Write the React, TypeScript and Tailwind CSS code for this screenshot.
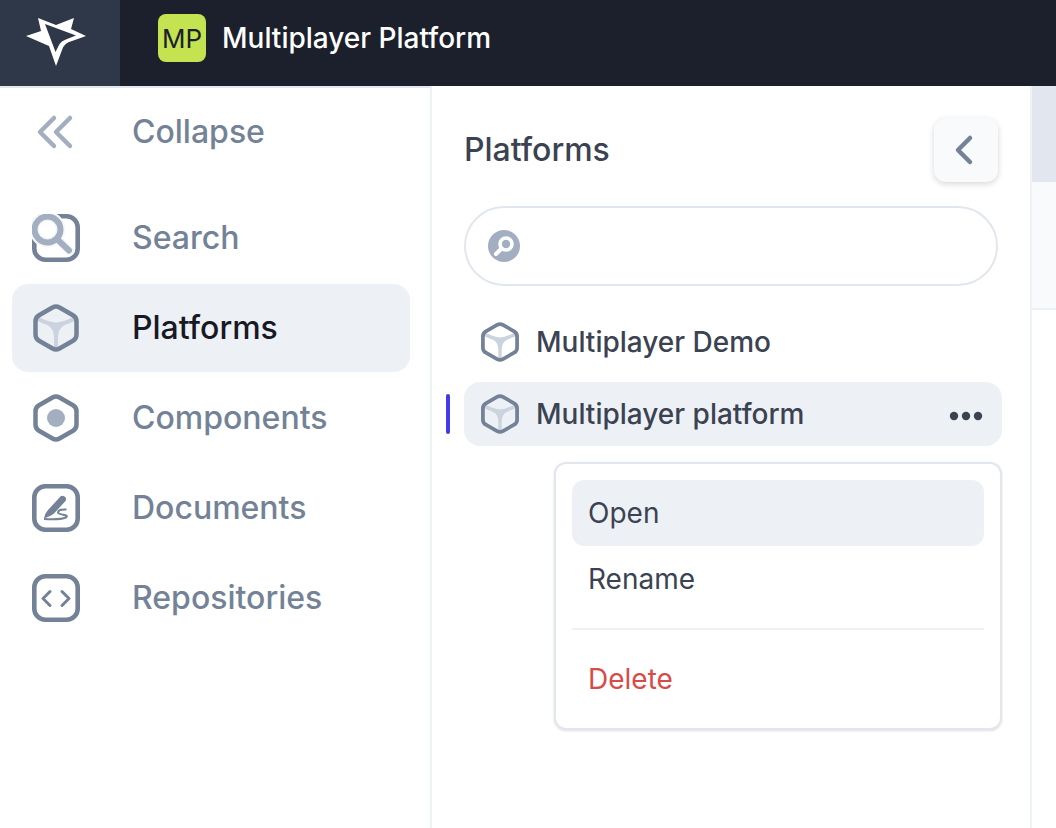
import type { ReactNode } from "react";

const HEXAGON =
  "M20.500 3.500Q24 1.500 27.500 3.500L41 11.200Q44.500 13.200 44.500 17.200V30.800Q44.500 34.800 41 36.800L27.500 44.500Q24 46.500 20.500 44.500L7 36.800Q3.500 34.800 3.500 30.800V17.200Q3.500 13.200 7 11.200Z";

function Logo() {
  return (
    <svg viewBox="0 0 60 48" className="h-12 w-15" aria-hidden="true">
      <path
        fill="#fff"
        fillRule="evenodd"
        d="M12 0 30 7 48 0 45 11 60 18 46 23Q38 25 36 32L30 48 23 28 0 18 15 13ZM19 6 29.500 34 33 27Q35 23 41 21L50 17.500Z"
      />
    </svg>
  );
}

function CollapseIcon() {
  return (
    <svg viewBox="0 0 48 48" className="size-12" fill="none" stroke="#A3AFC0" strokeWidth="4.500" strokeLinecap="round" strokeLinejoin="round" aria-hidden="true">
      <path d="M22 10 8 24l14 14M38 10 24 24l14 14" />
    </svg>
  );
}

function SearchIcon() {
  return (
    <svg viewBox="0 0 48 48" className="size-12" fill="none" aria-hidden="true">
      <rect x="2.300" y="2.300" width="43.400" height="43.400" rx="11" stroke="#748298" strokeWidth="4.600" />
      <circle cx="15.500" cy="15.500" r="18" fill="#F5F8FB" />
      <path d="m25 25 13 12" stroke="#F5F8FB" strokeWidth="9" strokeLinecap="round" />
      <path d="m25 25 12 11.500" stroke="#A3AFC0" strokeWidth="6" strokeLinecap="round" />
      <circle cx="15.500" cy="15.500" r="13" fill="#F1F5F9" stroke="#A3AFC0" strokeWidth="6" />
      <circle cx="15.500" cy="15.500" r="8.500" fill="#fff" />
    </svg>
  );
}

function CubeIcon({ className }: { className?: string }) {
  return (
    <svg viewBox="0 0 48 48" className={className} fill="none" aria-hidden="true">
      <path fill="#CBD3DE" d="M5 12Q17 18.500 24 18.500T43 12V17L32 21.500Q26 24.500 26 34V45H22V34Q22 24.500 16 21.500L5 17Z" />
      <path d={HEXAGON} stroke="#748298" strokeWidth="4.500" strokeLinejoin="round" />
    </svg>
  );
}

function ComponentIcon() {
  return (
    <svg viewBox="0 0 48 48" className="size-12" fill="none" aria-hidden="true">
      <path d={HEXAGON} stroke="#748298" strokeWidth="4.500" strokeLinejoin="round" />
      <circle cx="24" cy="24" r="9" fill="#A3AFC0" />
    </svg>
  );
}

function DocumentIcon() {
  return (
    <svg viewBox="0 0 48 48" className="size-12" fill="none" stroke="#748298" aria-hidden="true">
      <rect x="2.300" y="2.300" width="43.400" height="43.400" rx="11" strokeWidth="4.600" />
      <path fill="#748298" stroke="none" d="M28 13Q30 11 32.500 12.500T33.500 17L22 29.500Q19 32 12 34.500Q13 29 16 26Z" />
      <path d="M12 35Q28 36 34 33.500C38 30 27 31.500 26 28.500Q26 25 34.500 25.500" strokeWidth="2" />
    </svg>
  );
}

function RepositoryIcon() {
  return (
    <svg viewBox="0 0 48 48" className="size-12" fill="none" stroke="#748298" strokeLinecap="round" strokeLinejoin="round" aria-hidden="true">
      <rect x="2.300" y="2.300" width="43.400" height="43.400" rx="11" strokeWidth="4.600" />
      <path d="m18 17.500-7 7 7 7M30 17.500l7 7-7 7" strokeWidth="3" />
    </svg>
  );
}

function FilterIcon() {
  return (
    <svg viewBox="0 0 32 32" className="size-8 shrink-0" fill="none" aria-hidden="true">
      <circle cx="16" cy="16" r="16" fill="#A3AFC0" />
      <circle cx="18" cy="14" r="6" stroke="#fff" strokeWidth="3.600" />
      <path d="m13 19-5 5" stroke="#fff" strokeWidth="4" strokeLinecap="round" />
    </svg>
  );
}

type NavItemProps = { icon: ReactNode; label: string; active?: boolean };

function NavItem({ icon, label, active }: NavItemProps) {
  return (
    <a
      href="#"
      className={`flex h-22 items-center gap-13 rounded-2xl px-5 text-[32px] font-medium ${
        active ? "bg-[#EDF1F6] text-[#171923]" : "text-[#748298]"
      }`}
    >
      {icon}
      {label}
    </a>
  );
}

export default function App() {
  return (
    <div className="flex min-h-screen flex-col bg-white font-['Inter',sans-serif] text-[#3B4252]">
      <header className="flex h-[86px] bg-[#1C202C]">
        <a href="#" aria-label="Home" className="flex w-30 items-start bg-[#2F3848] pt-[18px] pl-[26px]">
          <Logo />
        </a>
        <div className="flex h-19 items-center gap-4 pl-[38px]">
          <span className="flex size-12 items-center justify-center rounded-lg bg-[#C3E351] text-[26px] text-[#1C202C]">
            MP
          </span>
          <span className="text-[28px] font-medium text-white">Multiplayer Platform</span>
        </div>
      </header>

      <div className="flex grow">
        <nav className="flex w-[432px] shrink-0 flex-col gap-0.5 border-t-2 border-r-2 border-t-[#E2E8F0] border-r-[#EDF2F7] pr-5 pl-3">
          <button type="button" className="mb-4 flex h-22 items-center gap-13 px-5 text-[32px] font-medium text-[#748298]">
            <CollapseIcon />
            Collapse
          </button>
          <NavItem icon={<SearchIcon />} label="Search" />
          <NavItem icon={<CubeIcon className="size-12" />} label="Platforms" active />
          <NavItem icon={<ComponentIcon />} label="Components" />
          <NavItem icon={<DocumentIcon />} label="Documents" />
          <NavItem icon={<RepositoryIcon />} label="Repositories" />
        </nav>

        <section className="min-w-0 grow border-r-2 border-[#EDF2F7] pt-8 pr-7 pl-8">
          <div className="mr-1 flex items-center justify-between">
            <h1 className="text-[32px] font-medium">Platforms</h1>
            <button
              type="button"
              aria-label="Back"
              className="flex size-16 items-center justify-center rounded-xl bg-[#F8FAFC] shadow-[0_2px_6px_rgba(0,0,0,0.16)]"
            >
              <svg viewBox="0 0 32 32" className="size-8" fill="none" stroke="#748298" strokeWidth="4.500" strokeLinecap="round" strokeLinejoin="round">
                <path d="M20 4 8 16l12 12" />
              </svg>
            </button>
          </div>

          <label className="mt-6 mr-1 flex h-20 items-center gap-4 rounded-full border-2 border-[#E2E7EE] px-[22px]">
            <FilterIcon />
            <input type="search" aria-label="Search platforms" className="min-w-0 grow text-[28px] outline-none" />
          </label>

          <ul className="mt-6 flex flex-col gap-2 text-[28px] font-medium">
            <li className="flex h-16 items-center gap-4 rounded-2xl px-4">
              <CubeIcon className="size-10" />
              <a href="#">Multiplayer Demo</a>
            </li>
            <li className="relative flex h-16 items-center gap-4 rounded-2xl bg-[#EDF1F6] px-4">
              <span className="absolute top-3 -left-[18px] h-10 w-1 rounded-xs bg-[#433AEB]" />
              <CubeIcon className="size-10" />
              <a href="#" className="grow">Multiplayer platform</a>
              <button type="button" aria-label="More actions" className="flex size-10 items-center justify-center">
                <svg viewBox="0 0 40 40" className="size-10" fill="currentColor">
                  <circle cx="8" cy="22" r="4.200" />
                  <circle cx="20" cy="22" r="4.200" />
                  <circle cx="32" cy="22" r="4.200" />
                </svg>
              </button>

              <div className="absolute top-20 right-0 flex w-112 flex-col rounded-xl border-2 border-[#E2E7EE] bg-white p-4 font-normal shadow-sm">
                <button type="button" className="h-[66px] rounded-xl bg-[#EDF1F6] px-4 text-left">Open</button>
                <button type="button" className="h-[66px] rounded-xl px-4 text-left">Rename</button>
                <hr className="my-4 border-t-2 border-[#EDF1F6]" />
                <button type="button" className="h-[66px] rounded-xl px-4 text-left text-[#D64C48]">Delete</button>
              </div>
            </li>
          </ul>
        </section>

        <aside className="w-6 shrink-0">
          <div className="h-24 bg-[#E2E7EF]" />
          <div className="h-32 border-b-2 border-[#EDF1F6] bg-[#F8FAFC]" />
        </aside>
      </div>
    </div>
  );
}
